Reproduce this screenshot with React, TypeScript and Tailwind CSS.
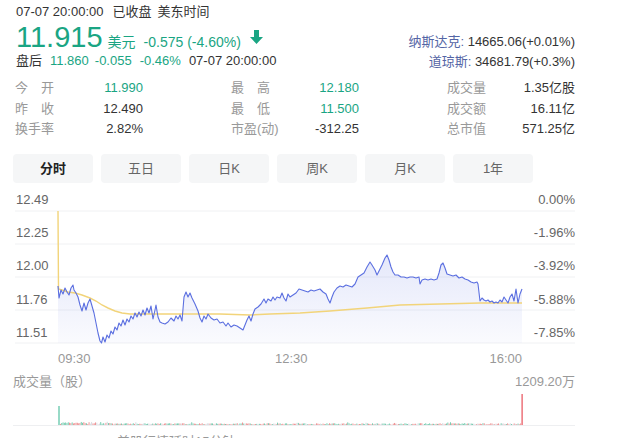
import React from 'react';

const GREEN = '#1aa583';

// price line, in page pixels
const pricePts: [number, number][] = [
  [58, 285], [59, 297], [61, 289], [63, 293], [65, 287], [67, 291], [69, 294], [71, 287], [73, 284], [74, 289],
  [76, 292], [78, 296], [80, 304], [82, 310], [84, 302], [86, 309], [88, 302], [90, 298], [92, 305], [94, 312],
  [96, 322], [98, 332], [100, 340], [101.5, 342], [103, 336], [105, 341], [107, 334], [109, 337], [111, 330],
  [113, 333], [115, 326], [117, 329], [119, 322], [121, 325], [123, 319], [125, 324], [127, 318], [129, 321],
  [131, 315], [133, 318], [135, 312], [137, 316], [139, 311], [141, 315], [143, 309], [145, 314], [147, 307],
  [149, 312], [151, 305], [153, 318], [155, 309], [156, 304], [158, 316], [160, 321], [162, 322], [165, 323],
  [168, 321], [171, 317], [174, 320], [176, 315], [178, 318], [180, 314], [182, 320], [184, 296], [186, 291],
  [188, 296], [190, 292], [192, 297], [195, 303], [198, 310], [200, 317], [202, 321], [204, 315], [206, 318],
  [208, 313], [211, 317], [214, 319], [217, 318], [220, 322], [223, 321], [226, 325], [228, 322], [231, 326],
  [234, 324], [237, 325], [240, 327], [243, 329], [245, 324], [247, 319], [249, 315], [251, 320], [253, 313],
  [255, 308], [258, 306], [261, 303], [264, 298], [266, 302], [268, 298], [271, 300], [273, 296], [275, 299],
  [277, 296], [280, 297], [282, 292], [284, 297], [286, 300], [288, 293], [290, 296], [293, 294], [296, 292],
  [299, 288], [302, 289], [305, 290], [308, 291], [311, 289], [314, 290], [317, 289], [320, 288], [323, 291],
  [326, 293], [328, 298], [330, 302], [332, 296], [334, 291], [337, 287], [340, 285], [343, 286], [346, 284],
  [349, 285], [352, 286], [355, 283], [358, 276], [361, 274], [364, 272], [367, 266], [370, 261], [372, 264],
  [375, 269], [377, 274], [379, 270], [382, 264], [385, 257], [387, 254], [389, 259], [391, 266], [393, 271],
  [395, 274], [398, 274], [401, 276], [404, 276], [407, 277], [410, 276], [413, 276], [416, 277], [419, 276],
  [420, 283], [422, 279], [425, 278], [428, 279], [431, 278], [434, 279], [437, 278], [439, 272], [441, 264],
  [443, 262], [445, 267], [447, 273], [450, 274], [453, 275], [456, 274], [459, 277], [462, 276], [465, 278],
  [468, 279], [471, 281], [474, 282], [477, 281], [478, 283], [480, 300], [482, 297], [484, 299], [486, 300],
  [488, 299], [490, 301], [492, 300], [494, 302], [496, 301], [498, 302], [500, 299], [502, 301], [504, 296],
  [506, 299], [508, 302], [510, 296], [512, 293], [514, 300], [516, 288], [518, 302], [520, 293], [522, 288],
];

const avgPts: [number, number][] = [
  [58, 210], [58.5, 288], [62, 289], [68, 291], [75, 292], [82, 294], [90, 297], [96, 300], [102, 304],
  [108, 307], [115, 310], [122, 312], [130, 313], [150, 313], [180, 313], [220, 313], [250, 314], [270, 313],
  [300, 312], [330, 310], [367, 307], [400, 304], [440, 303], [480, 302], [522, 302],
];

const toStr = (pts: [number, number][]) => pts.map(p => `${p[0]},${p[1]}`).join(' ');

// volume bars: small noise, a spike at the open and at the close
const volumeBars = (() => {
  let seed = 7;
  const rnd = () => {
    seed = (seed * 16807) % 2147483647;
    return seed / 2147483647;
  };
  const bars: { x: number; h: number; c: string }[] = [];
  for (let x = 60; x < 521; x += 1.3) {
    const early = x < 110 ? 1.6 : 0;
    const h = 0.6 + rnd() * 1.2 + (rnd() > 0.95 ? 1.2 : 0) + early * rnd();
    const r = rnd();
    const c = r < 0.45 ? '#ec8a8c' : r < 0.85 ? '#6cc7aa' : '#d3d6dc';
    bars.push({ x, h, c });
  }
  return bars;
})();

const leftLabels = ['12.49', '12.25', '12.00', '11.76', '11.51'];
const rightLabels = ['0.00%', '-1.96%', '-3.92%', '-5.88%', '-7.85%'];
const gridY = [210, 243, 276, 309, 342];

const stats = [
  [
    { label: ['今', '开'], value: '11.990', green: true },
    { label: ['最', '高'], value: '12.180', green: true },
    { label: ['成交量'], value: '1.35亿股' },
  ],
  [
    { label: ['昨', '收'], value: '12.490' },
    { label: ['最', '低'], value: '11.500', green: true },
    { label: ['成交额'], value: '16.11亿' },
  ],
  [
    { label: ['换手率'], value: '2.82%' },
    { label: ['市盈(动)'], value: '-312.25' },
    { label: ['总市值'], value: '571.25亿' },
  ],
];

const tabs = ['分时', '五日', '日K', '周K', '月K', '1年'];

export default function App() {
  return (
    <div className="w-[634px] h-[438px] overflow-hidden bg-white text-[13px] text-[#333] font-[family-name:'Liberation_Sans','Noto_Sans_CJK_SC',sans-serif]">
      {/* header */}
      <div className="flex pl-4 pr-[59px]">
        <div className="flex-1">
          <div className="mt-[3px] flex h-[18px] leading-[18px]">
            <span>07-07 20:00:00</span>
            <span className="ml-[9px]">已收盘</span>
            <span className="ml-[6px]">美东时间</span>
          </div>
          <div className="mt-[1px] flex h-[30px] items-baseline leading-[30px] text-[#1aa583]">
            <span className="text-[29px]">11.915</span>
            <span className="ml-[5px] text-[14px]">美元</span>
            <span className="ml-[8px] text-[14px]">-0.575 (-4.60%)</span>
            <svg width="13" height="14" viewBox="0 0 13 14" className="ml-[9px] self-center">
              <path d="M4 0 H9 V7 H13 L6.5 14 L0 7 H4 Z" fill={GREEN} />
            </svg>
          </div>
          <div className="flex h-[18px] leading-[18px]">
            <span>盘后</span>
            <span className="ml-[8px] text-[#1aa583]">11.860</span>
            <span className="ml-[6px] text-[#1aa583]">-0.055</span>
            <span className="ml-[8px] text-[#1aa583]">-0.46%</span>
            <span className="ml-[8px]">07-07 20:00:00</span>
          </div>
        </div>
        <div className="flex flex-col items-end">
          <div className="mt-[33px] h-[18px] leading-[18px]">
            <span className="text-[#5465a5]">纳斯达克:</span> 14665.06(+0.01%)
          </div>
          <div className="mt-[2px] h-[18px] leading-[18px]">
            <span className="text-[#5465a5]">道琼斯:</span> 34681.79(+0.3%)
          </div>
        </div>
      </div>

      {/* stats */}
      <div className="mt-[7px] grid grid-cols-[128px_128px_128px] gap-x-[88px] pl-[15px]">
        {stats.map((row, i) =>
          row.map((cell, j) => (
            <div key={`${i}-${j}`} className="flex h-[20.5px] items-center justify-between leading-[20.5px]">
              <span className={`flex text-[#999] ${cell.label.length === 2 ? 'w-[39px] justify-between' : ''}`}>
                {cell.label.map(t => (
                  <span key={t}>{t}</span>
                ))}
              </span>
              <span className={cell.green ? 'text-[#1aa583]' : 'text-[#333]'}>{cell.value}</span>
            </div>
          ))
        )}
      </div>

      {/* tabs */}
      <div className="mt-[14px] flex gap-[8px] pl-[13px]">
        {tabs.map((t, i) => (
          <div
            key={t}
            className={`h-[29px] w-[80px] rounded-[4px] bg-[#f5f6f7] text-center leading-[29px] ${
              i === 0 ? 'font-bold text-[#222]' : 'text-[#666]'
            }`}
          >
            {t}
          </div>
        ))}
      </div>

      {/* price chart */}
      <svg width="634" height="180" viewBox="0 186 634 180" className="mt-[4px] block">
        <defs>
          <linearGradient id="fill" x1="0" y1="0" x2="0" y2="1">
            <stop offset="0%" stopColor="#5b6fe0" stopOpacity="0.16" />
            <stop offset="100%" stopColor="#5b6fe0" stopOpacity="0.03" />
          </linearGradient>
        </defs>
        {gridY.map(y => (
          <line key={y} x1="15" x2="575" y1={y} y2={y} stroke="#f0f1f3" strokeWidth="1" />
        ))}
        {leftLabels.map((t, i) => (
          <text key={t} x="16" y={203 + i * 33.2} fontSize="13" fill="#666">
            {t}
          </text>
        ))}
        {rightLabels.map((t, i) => (
          <text key={t} x="575" y={203 + i * 33.2} fontSize="13" fill="#666" textAnchor="end">
            {t}
          </text>
        ))}
        <polygon points={`${toStr(pricePts)} 522,342 58,342`} fill="url(#fill)" />
        <polyline points={toStr(avgPts)} fill="none" stroke="#f2d47a" strokeWidth="1.4" />
        <polyline points={toStr(pricePts)} fill="none" stroke="#5b6fe0" strokeWidth="1.1" strokeLinejoin="round" />
        <text x="58" y="362" fontSize="13" fill="#999">09:30</text>
        <text x="275" y="362" fontSize="13" fill="#999">12:30</text>
        <text x="522" y="362" fontSize="13" fill="#999" textAnchor="end">16:00</text>
      </svg>

      {/* volume */}
      <div className="mt-[6px] flex h-[18px] justify-between pl-[13px] pr-[59px] leading-[18px] text-[#999]">
        <span>成交量（股）</span>
        <span>1209.20万</span>
      </div>
      <svg width="634" height="36" viewBox="0 390 634 36" className="block">
        <line x1="13" x2="575" y1="424.5" y2="424.5" stroke="#eeeff1" strokeWidth="1" />
        <rect x="58.5" y="405" width="1" height="19" fill="#33b58f" />
        {volumeBars.map((b, i) => (
          <rect key={i} x={b.x} y={424 - b.h} width="0.9" height={b.h} fill={b.c} />
        ))}
        <rect x="521.5" y="393" width="1.2" height="31" fill="#e8505b" />
      </svg>
      <div className="mt-[6px] pl-[117px] leading-[18px] text-[#999]">美股行情延时15分钟</div>
    </div>
  );
}
